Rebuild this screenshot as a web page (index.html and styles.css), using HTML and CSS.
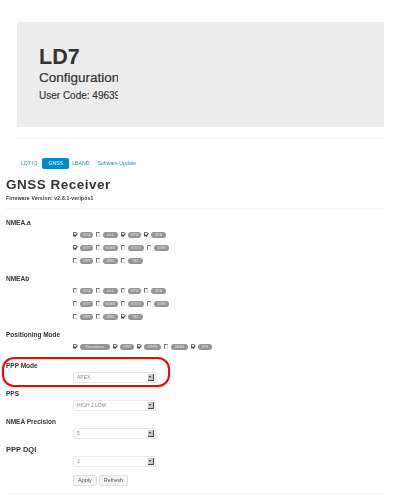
FILE: index.html
```html
<!DOCTYPE html>
<html lang="en">
<head>
    <meta charset="UTF-8">
    <meta name="viewport" content="width=device-width, initial-scale=1.0">
    <title>LD7 Configuration</title>
    <link rel="stylesheet" href="styles.css">
</head>
<body>
    <div class="page">
        <div class="hero">
            <h1>LD7</h1>
            <h2>Configuration</h2>
            <p>User Code: 49639</p>
        </div>
        <hr class="rule rule-hero">

        <ul class="tabs">
            <li>LD7 IO</li>
            <li class="active">GNSS</li>
            <li>LBAND</li>
            <li>Software Update</li>
        </ul>

        <h3 class="title">GNSS Receiver</h3>
        <div class="firmware">Firmware Version: v2.8.1-veripos1</div>
        <hr class="rule rule-title">

        <div class="label">NMEA.a</div>
        <div class="checks">
            <div class="row">
                <input type="checkbox" checked><span class="pill w13">GGA</span>
                <input type="checkbox"><span class="pill w15">GLL</span>
                <input type="checkbox" checked><span class="pill w13">WTG</span>
                <input type="checkbox" checked><span class="pill w15">ZDA</span>
            </div>
            <div class="row">
                <input type="checkbox" checked><span class="pill w13">GST</span>
                <input type="checkbox"><span class="pill w15">GSAB</span>
                <input type="checkbox"><span class="pill w16">KSSV</span>
                <input type="checkbox"><span class="pill w15">GMS</span>
            </div>
            <div class="row">
                <input type="checkbox"><span class="pill w13">GRS</span>
                <input type="checkbox"><span class="pill w15">RMC</span>
                <input type="checkbox"><span class="pill w15">HDI</span>
            </div>
        </div>

        <div class="label">NMEAb</div>
        <div class="checks">
            <div class="row">
                <input type="checkbox"><span class="pill w13">GGA</span>
                <input type="checkbox"><span class="pill w15">GLL</span>
                <input type="checkbox"><span class="pill w13">WTG</span>
                <input type="checkbox"><span class="pill w15">ZDA</span>
            </div>
            <div class="row">
                <input type="checkbox"><span class="pill w13">GST</span>
                <input type="checkbox"><span class="pill w15">GSAB</span>
                <input type="checkbox"><span class="pill w16">KSSV</span>
                <input type="checkbox"><span class="pill w15">GMS</span>
            </div>
            <div class="row">
                <input type="checkbox"><span class="pill w13">GRS</span>
                <input type="checkbox"><span class="pill w15">RMC</span>
                <input type="checkbox" checked><span class="pill w15">HDI</span>
            </div>
        </div>

        <div class="label">Positioning Mode</div>
        <div class="checks">
            <div class="row">
                <input type="checkbox" checked><span class="pill w30">Standalone</span>
                <input type="checkbox" checked><span class="pill w14">PPP</span>
                <input type="checkbox" checked><span class="pill w17">DGPS</span>
                <input type="checkbox"><span class="pill w17">SBAS</span>
                <input type="checkbox" checked><span class="pill w14">RTK</span>
            </div>
        </div>

        <div class="highlight">
            <div class="label">PPP Mode</div>
            <div class="select">APEX<span class="arrow"></span></div>
            <div class="ring"></div>
        </div>

        <div class="label">PPS</div>
        <div class="select">HIGH 2 LOW<span class="arrow"></span></div>

        <div class="label">NMEA Precision</div>
        <div class="select">5<span class="arrow"></span></div>

        <div class="label label-large">PPP DQI</div>
        <div class="select">2<span class="arrow"></span></div>

        <div class="buttons">
            <button>Apply</button>
            <button>Refresh</button>
        </div>
        <hr class="rule rule-bottom">
    </div>
</body>
</html>
```
FILE: styles.css
```css
body {
    margin: 0;
    background-color: #fff;
    font-family: "Liberation Sans", Arial, sans-serif;
    color: #333;
}

.page {
    width: 418px;
    height: 499px;
    overflow: hidden;
    padding: 22px 34px 0 6px;
    box-sizing: border-box;
    filter: blur(0.35px);
}

.hero {
    margin-left: 11px;
    height: 105px;
    padding: 23px 0 0 22px;
    box-sizing: border-box;
    background-color: #ececec;
}

.hero h1 {
    margin: 0;
    font-size: 21.5px;
    line-height: 24px;
    color: #333;
}

.hero h2 {
    margin: 0;
    width: 79px;
    overflow: hidden;
    font-size: 13.5px;
    font-weight: normal;
    line-height: 18px;
    -webkit-text-stroke: 0.2px #333;
}

.hero p {
    margin: 2px 0 0;
    width: 79px;
    overflow: hidden;
    white-space: nowrap;
    font-size: 10px;
    line-height: 14px;
    -webkit-text-stroke: 0.15px #333;
}

.rule {
    height: 1px;
    margin: 0;
    border: 0;
    background-color: #f4f4f4;
}

.rule-hero {
    margin: 11px 0 0 11px;
}

.rule-title {
    margin: 6px 0 9px;
}

.rule-bottom {
    margin-top: 7px;
}

.tabs {
    display: flex;
    margin: 19px 0 0;
    padding: 0 0 0 12px;
    list-style: none;
    font-size: 5.2px;
    line-height: 11px;
}

.tabs li {
    padding: 0 5px 0 3px;
    color: #2a8fa8;
}

.tabs .active {
    padding: 0 6px;
    border-radius: 2px;
    background-color: #0088cc;
    color: #fff;
}

.title {
    margin: 7px 0 0;
    font-size: 13.5px;
    line-height: 17px;
    font-weight: bold;
    letter-spacing: 0.5px;
    color: #333;
}

.firmware {
    margin-top: 1px;
    font-size: 5px;
    line-height: 8px;
    font-weight: bold;
    letter-spacing: 0.2px;
}

.label {
    margin-top: 6px;
    font-size: 6.5px;
    line-height: 10px;
    font-weight: bold;
}

.label-large {
    font-size: 7.5px;
}

.checks {
    margin-left: 67px;
}

.checks + .label {
    margin-top: 7px;
}

.row {
    display: flex;
    align-items: center;
    height: 13px;
}

.row input {
    appearance: none;
    position: relative;
    width: 4px;
    height: 5px;
    margin: 0 3px 0 0;
    box-sizing: border-box;
    border-top: 1px solid #777;
    border-left: 1px solid #777;
    border-right: 1px solid #ddd;
    border-bottom: 1px solid #ddd;
}

/* small dark tick inside the box */
.row input:checked::after {
    content: "";
    position: absolute;
    top: -1px;
    left: 0;
    width: 1.5px;
    height: 3px;
    border-right: 1px solid #333;
    border-bottom: 1px solid #333;
    transform: rotate(40deg);
}

.pill {
    height: 6px;
    margin-right: 3px;
    border-radius: 3px;
    background-color: #949494;
    color: #d4d4d4;
    font-size: 3.5px;
    line-height: 6px;
    font-weight: bold;
    text-align: center;
    white-space: nowrap;
}

.w13 { width: 13px; }
.w14 { width: 14px; }
.w15 { width: 15px; }
.w16 { width: 16px; }
.w17 { width: 17px; }
.w30 { width: 30px; }

.select {
    position: relative;
    width: 83px;
    height: 11px;
    margin: 1px 0 0 67px;
    padding-left: 3px;
    box-sizing: border-box;
    border: 1px solid #e8e8e8;
    border-radius: 1px;
    color: #888;
    font-size: 5px;
    line-height: 9px;
}

.arrow {
    position: absolute;
    top: 1px;
    right: 1px;
    width: 6px;
    height: 7px;
    box-sizing: border-box;
    border-right: 1px solid #444;
    border-bottom: 1px solid #444;
    background-color: #ccc;
}

.arrow::after {
    content: "";
    position: absolute;
    top: 2px;
    left: 1px;
    border-left: 1.5px solid transparent;
    border-right: 1.5px solid transparent;
    border-top: 2px solid #222;
}

.highlight {
    position: relative;
    margin-top: 8px;
}

.highlight .label {
    margin-top: 0;
}

.ring {
    position: absolute;
    top: -4px;
    left: -4px;
    width: 168px;
    height: 30px;
    box-sizing: border-box;
    border: 2px solid #f00;
    border-radius: 12px;
}

.buttons {
    display: flex;
    gap: 2px;
    margin: 8px 0 0 67px;
}

.buttons button {
    height: 11px;
    padding: 0 4px;
    border: 1px solid #e0e0e0;
    border-radius: 2px;
    background-color: #f4f4f4;
    color: #555;
    font-family: inherit;
    font-size: 5.5px;
    line-height: 9px;
}
```
